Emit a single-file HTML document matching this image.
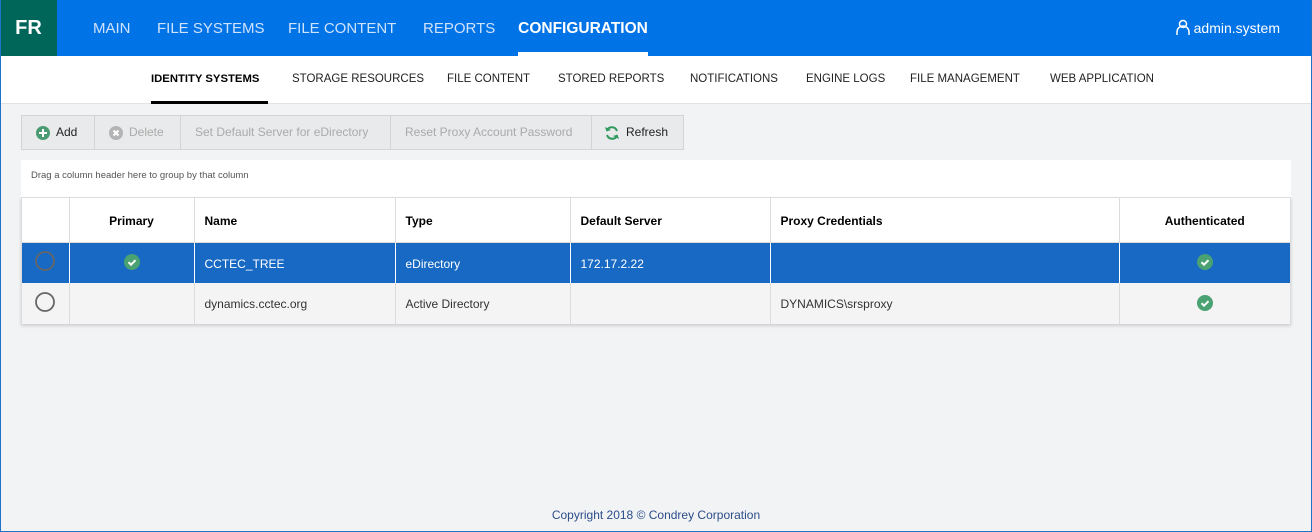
<!DOCTYPE html>
<html><head><meta charset="utf-8"><style>
*{box-sizing:border-box;margin:0;padding:0}
body{width:1312px;height:532px;overflow:hidden;font-family:"Liberation Sans",sans-serif;background:#f2f3f4;position:relative;white-space:nowrap}
.frame{position:absolute;inset:0;border:1px solid #1e73c6;border-top:none;pointer-events:none;z-index:10}
.top{position:absolute;left:0;top:0;width:1312px;height:56px;background:#0073e7}
.logo{position:absolute;left:0;top:0;width:57px;height:56px;background:#00665a;color:#fff;font-weight:bold;font-size:20px;line-height:57px;text-align:center}
.tab{position:absolute;top:0;height:56px;line-height:58px;color:#cfe3fb;font-size:15px}
.tab.act{color:#fff;font-weight:bold;font-size:15.5px;text-align:center}
.tab.act:after{content:"";position:absolute;left:0;right:0;bottom:0;height:4px;background:#fff}
.user{position:absolute;right:32px;top:0;line-height:56px;color:#fff;font-size:14px}
.sub{position:absolute;left:0;top:56px;width:1312px;height:48px;background:#fff;border-bottom:1px solid #e2e2e2}
.st{position:absolute;top:0;height:48px;line-height:46px;font-size:11.5px;color:#222}
.st.act{font-weight:bold;color:#000;font-size:11.3px}
.st.act:after{content:"";position:absolute;left:0;right:0;bottom:0;height:3px;background:#000}
.tb{position:absolute;left:21px;top:115px;width:663px;height:35px;background:#e9eaeb;border:1px solid #d4d4d4;display:flex}
.tb div{border-right:1px solid #d4d4d4;height:33px;line-height:33px;font-size:12px;color:#aaa;padding:0 0 0 14px;display:flex;align-items:center;gap:6px;flex:none}
.tb div:last-child{border-right:none}
.grp{position:absolute;left:21px;top:160px;width:1270px;height:37px;background:#fff;font-size:9.5px;color:#555;padding:10px 0 0 10px}
.grid{position:absolute;left:21px;top:197px;width:1270px;height:127px;background:#fff;border:1px solid #dcdcdc;box-shadow:0 2px 3px rgba(0,0,0,.15)}
table{border-collapse:collapse;width:1268px;table-layout:fixed}
td,th{border-left:1px solid #dcdcdc;font-size:12px;padding:0 10px;text-align:left}
td:first-child,th:first-child{border-left:none}
th{height:44px;font-weight:bold;color:#000;border-bottom:1px solid #dcdcdc;padding-top:2px}
tr.r1 td{height:41px;background:#1769c4;color:#fff;border-left-color:#fff;padding-top:2px}
tr.r2 td{height:41px;background:#f4f4f4;color:#333;padding-top:1px}
.c{text-align:center}
.ft{position:absolute;left:0;width:1312px;top:508px;text-align:center;font-size:12px;color:#2b4d8a}
</style></head><body>
<div class="top">
<div class="logo">FR</div>
<div class="tab" style="left:93px">MAIN</div>
<div class="tab" style="left:157px">FILE SYSTEMS</div>
<div class="tab" style="left:288px">FILE CONTENT</div>
<div class="tab" style="left:423px">REPORTS</div>
<div class="tab act" style="left:518px;width:130px">CONFIGURATION</div>
<div class="user"><svg width="14" height="16" viewBox="0 0 14 16" style="vertical-align:-2px;margin-right:4px"><circle cx="7" cy="5" r="3.5" fill="none" stroke="#fff" stroke-width="1.5"/><path d="M1 16v-3a6 6 0 0 1 12 0v3" fill="none" stroke="#fff" stroke-width="1.5"/></svg>admin.system</div>
</div>
<div class="sub">
<div class="st act" style="left:151px;width:117px">IDENTITY SYSTEMS</div>
<div class="st" style="left:292px">STORAGE RESOURCES</div>
<div class="st" style="left:447px">FILE CONTENT</div>
<div class="st" style="left:558px">STORED REPORTS</div>
<div class="st" style="left:690px">NOTIFICATIONS</div>
<div class="st" style="left:806px">ENGINE LOGS</div>
<div class="st" style="left:910px">FILE MANAGEMENT</div>
<div class="st" style="left:1050px">WEB APPLICATION</div>
</div>
<div class="tb">
<div style="color:#222;width:73px"><svg width="14" height="14"><circle cx="7" cy="7" r="7" fill="#4a9a72"/><path d="M7 3v8M3 7h8" stroke="#fff" stroke-width="2"/></svg>Add</div>
<div style="width:86px"><svg width="14" height="14"><circle cx="7" cy="7" r="7" fill="#b4b4b4"/><path d="M4.5 4.5l5 5M9.5 4.5l-5 5" stroke="#fff" stroke-width="2"/></svg>Delete</div>
<div style="width:210px">Set Default Server for eDirectory</div>
<div style="width:201px">Reset Proxy Account Password</div>
<div style="color:#222;width:91px;padding-left:12px"><svg width="16" height="16" viewBox="0 0 16 16"><path d="M13 6A5.5 5.5 0 0 0 3 5" fill="none" stroke="#2f9a5e" stroke-width="2"/><path d="M1 2l1.5 4.5L7 5z" fill="#2f9a5e"/><path d="M3 10a5.5 5.5 0 0 0 10 1" fill="none" stroke="#2f9a5e" stroke-width="2"/><path d="M15 14l-1.5-4.5L9 11z" fill="#2f9a5e"/></svg>Refresh</div>
</div>
<div class="grp">Drag a column header here to group by that column</div>
<div class="grid"><table>
<colgroup><col style="width:47px"><col style="width:125px"><col style="width:201px"><col style="width:175px"><col style="width:200px"><col style="width:349px"><col style="width:171px"></colgroup>
<tr><th></th><th class="c">Primary</th><th>Name</th><th>Type</th><th>Default Server</th><th>Proxy Credentials</th><th class="c">Authenticated</th></tr>
<tr class="r1"><td class="c" style="padding:0"><svg width="20" height="20"><circle cx="10" cy="10" r="9" fill="none" stroke="#666" stroke-width="1.8"/></svg></td><td class="c"><svg width="16" height="16"><circle cx="8" cy="8" r="8" fill="#4aa172"/><path d="M4.5 8.2l2.5 2.5 4.5-4.5" fill="none" stroke="#fff" stroke-width="2"/></svg></td><td>CCTEC_TREE</td><td>eDirectory</td><td>172.17.2.22</td><td></td><td class="c"><svg width="16" height="16"><circle cx="8" cy="8" r="8" fill="#4aa172"/><path d="M4.5 8.2l2.5 2.5 4.5-4.5" fill="none" stroke="#fff" stroke-width="2"/></svg></td></tr>
<tr class="r2"><td class="c" style="padding:0"><svg width="20" height="20"><circle cx="10" cy="10" r="9" fill="none" stroke="#666" stroke-width="1.8"/></svg></td><td></td><td>dynamics.cctec.org</td><td>Active Directory</td><td></td><td>DYNAMICS\srsproxy</td><td class="c"><svg width="16" height="16"><circle cx="8" cy="8" r="8" fill="#4aa172"/><path d="M4.5 8.2l2.5 2.5 4.5-4.5" fill="none" stroke="#fff" stroke-width="2"/></svg></td></tr>
</table></div>
<div class="ft">Copyright 2018 © Condrey Corporation</div>
<div class="frame"></div>
</body></html>
